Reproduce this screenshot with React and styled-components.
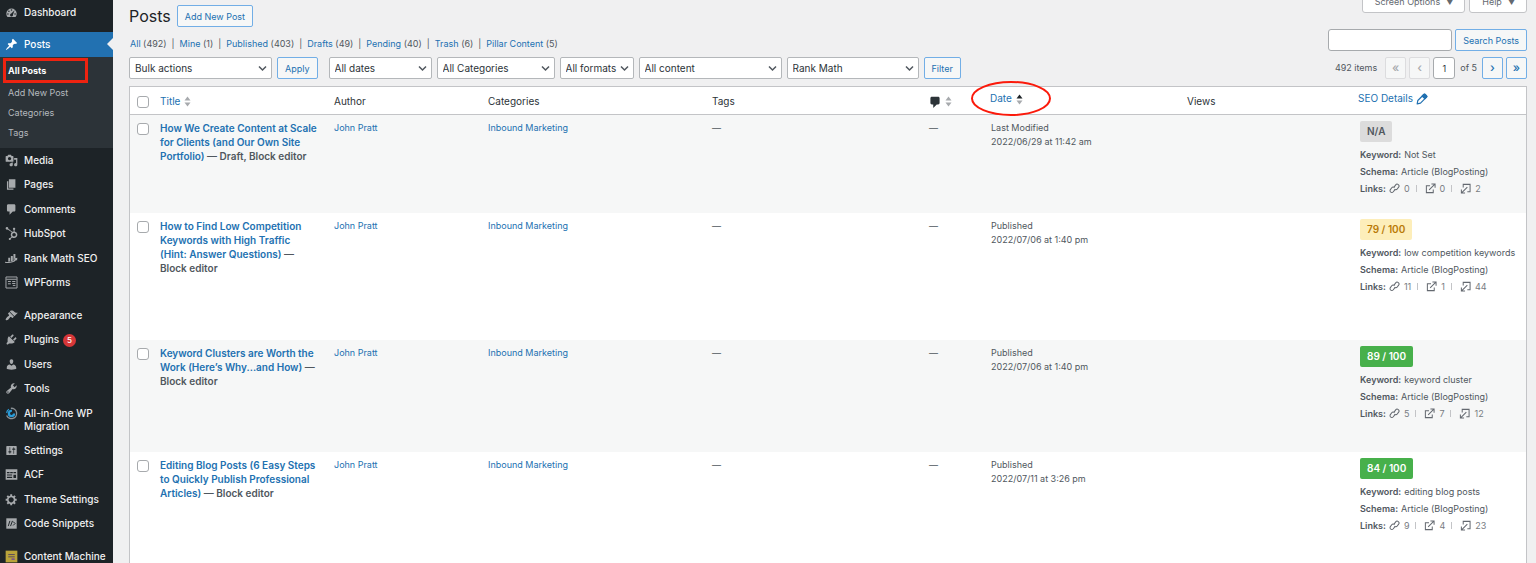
import React from 'react';
import styled, { createGlobalStyle, css } from 'styled-components';
import { FaHubspot } from 'react-icons/fa';

const GlobalStyle = createGlobalStyle`
  *, *::before, *::after {
    box-sizing: border-box;
  }

  body {
    margin: 0;
    background: #f0f0f1;
    color: #50575e;
    font-family: Inter, "Liberation Sans", sans-serif;
    font-size: 9px;
    line-height: 14px;
  }

  button, input, select {
    font-family: inherit;
    font-size: 9px;
  }

  a {
    color: #2271b1;
    text-decoration: none;
  }
`;

const Page = styled.div`
  display: flex;
  height: 100vh;
  overflow: hidden;
`;

// Sidebar
const Sidebar = styled.nav`
  flex: none;
  width: 113px;
  background: #1d2327;
`;

const MenuGroup = styled.ul`
  display: flex;
  flex-direction: column;
  height: ${(props) => props.$height}px;
  margin: 0 0 ${(props) => props.$gap || 0}px;
  padding: 0;
  list-style: none;
`;

const MenuItem = styled.li`
  display: flex;
  flex: 1 0 ${(props) => (props.$tall ? 37 : 24)}px;
`;

const MenuLink = styled.a`
  position: relative;
  display: flex;
  flex: 1;
  align-items: ${(props) => (props.$tall ? 'flex-start' : 'center')};
  gap: 6px;
  padding: ${(props) => (props.$tall ? '6px 8px 5px 5px' : '0 0 0 5px')};
  color: ${(props) => (props.$active ? '#fff' : '#f0f0f1')};
  background: ${(props) => (props.$active ? '#2271b1' : 'transparent')};
  font-size: 10px;
  font-weight: 500;
  line-height: 13px;

  svg {
    flex: none;
    width: 13px;
    height: 13px;
    color: ${(props) => (props.$active ? '#fff' : '#a7aaad')};
  }

  ${(props) => props.$active && css`
    &::after {
      content: '';
      position: absolute;
      right: 0;
      top: 6px;
      border: 6px solid transparent;
      border-left-width: 0;
      border-right-color: #f0f0f1;
    }
  `}
`;

const Count = styled.span`
  display: inline-block;
  width: 13px;
  height: 13px;
  margin-left: 4px;
  border-radius: 50%;
  background: #d63638;
  color: #fff;
  font-size: 8px;
  text-align: center;
`;

const SubMenu = styled.ul`
  margin: 0;
  padding: 1px 0 5px;
  list-style: none;
  background: #2c3338;
`;

const SubItem = styled.li`
  display: flex;
  height: ${(props) => (props.$current ? 25 : 20)}px;
  width: ${(props) => (props.$current ? '85px' : 'auto')};
  margin-left: 3px;
  padding-left: ${(props) => (props.$current ? 2 : 5)}px;
  align-items: center;
  border: ${(props) => (props.$current ? '3px solid #ee2310' : 'none')};

  a {
    color: ${(props) => (props.$current ? '#fff' : '#b4b9be')};
    font-weight: ${(props) => (props.$current ? 700 : 400)};
  }
`;

// Main area
const Main = styled.main`
  flex: 1;
  min-width: 0;
  padding: 0 9px 0 16px;
`;

const TopBar = styled.header`
  display: flex;
  justify-content: space-between;
  align-items: flex-start;
  height: 29px;
`;

const TitleRow = styled.div`
  display: flex;
  align-items: center;
  gap: 6px;
  padding-top: 5px;
`;

const PageTitle = styled.h1`
  margin: 0;
  color: #1d2327;
  font-size: 16px;
  font-weight: 400;
  line-height: 22px;
`;

const ScreenTabs = styled.div`
  display: flex;
  gap: 4px;
  margin-top: -10px;
`;

const ScreenTab = styled.button`
  height: 23px;
  padding: 0 10px 0 12px;
  border: 1px solid #c3c4c7;
  border-radius: 0 0 3px 3px;
  background: #fff;
  color: #646970;

  span {
    margin-left: 5px;
  }
`;

const Button = styled.button`
  height: 22px;
  padding: 0 7px;
  border: 1px solid ${(props) => (props.disabled ? '#dcdcde' : '#72aee6')};
  border-radius: 2px;
  background: #f6f7f7;
  color: ${(props) => (props.disabled ? '#a7aaad' : '#2271b1')};
  white-space: nowrap;
`;

const PageButton = styled(Button)`
  width: 21px;
  padding: 0 0 2px;
  font-size: 12px;
  font-weight: 500;
`;

const ViewsRow = styled.div`
  display: flex;
  justify-content: space-between;
  align-items: flex-end;
`;

const Views = styled.ul`
  display: flex;
  margin: 0;
  padding: 0 0 0 1px;
  list-style: none;

  li + li::before {
    content: '|';
    margin: 0 5px;
  }
`;

const SearchForm = styled.form`
  display: flex;
  gap: 3px;
`;

const TextBox = styled.input`
  width: ${(props) => props.$width}px;
  height: 22px;
  padding: 0 6px;
  border: 1px solid #a7aaad;
  border-radius: 3px;
  background: #fff;
  color: #2c3338;
  text-align: ${(props) => props.$align || 'left'};
`;

const TableNav = styled.div`
  display: flex;
  justify-content: space-between;
  margin: 6px 0 7px;
`;

const Filters = styled.div`
  display: flex;
  gap: 5px;
`;

const SelectWrap = styled.label`
  position: relative;
  display: block;
  width: ${(props) => props.$width}px;
  margin-left: ${(props) => (props.$apart ? 6 : 0)}px;

  select {
    width: 100%;
    height: 22px;
    padding: 0 14px 0 5px;
    border: 1px solid #b4b7ba;
    border-radius: 2px;
    background: #fff;
    color: #2c3338;
    font-size: 10px;
    appearance: none;
  }

  svg {
    position: absolute;
    right: 5px;
    top: 8px;
    width: 9px;
    height: 7px;
    pointer-events: none;
  }
`;

const Pagination = styled.div`
  display: flex;
  align-items: center;
  gap: 3px;
`;

const ItemsCount = styled.span`
  margin-right: 5px;
`;

const PageOf = styled.span`
  margin: 0 2px;
`;

// Posts table
const PostsTable = styled.table`
  width: 100%;
  border: 1px solid #c3c4c7;
  border-collapse: separate;
  border-spacing: 0;
  table-layout: fixed;
  background: #fff;
`;

const Th = styled.th`
  position: relative;
  height: 28px;
  padding: ${(props) => (props.$raised ? '4px 5px' : '0 6px')};
  border-bottom: 1px solid #c3c4c7;
  color: #2c3338;
  font-size: 10px;
  font-weight: 400;
  text-align: left;
  vertical-align: ${(props) => (props.$raised ? 'top' : 'middle')};

  svg {
    vertical-align: middle;
  }
`;

const SortIcon = styled.svg`
  width: 7px;
  height: 11px;
  margin-left: 1px;
`;

const Tr = styled.tr`
  height: ${(props) => props.$height}px;

  &:nth-child(odd) {
    background: #f6f7f7;
  }
`;

const Td = styled.td`
  padding: 6px;
  vertical-align: top;
`;

const TitleCell = styled(Td)`
  padding-right: 10px;
  font-size: 10px;
`;

const SeoCell = styled(Td)`
  padding-left: 7px;
  white-space: nowrap;
`;

const Check = styled.input`
  display: block;
  width: 12px;
  height: 12px;
  margin: 2px 0 0 1px;
  border: 1px solid #a7aaad;
  border-radius: 3px;
  background: #fff;
  appearance: none;
`;

const PostTitle = styled.strong`
  display: block;
  font-weight: 600;
`;

const Circled = styled.svg`
  position: absolute;
  left: -14px;
  top: -6px;
  width: 80px;
  height: 35px;
  pointer-events: none;
`;

const scoreColors = {
  none: ['#dcdcdc', '#50575e'],
  ok: ['#fdeeba', '#b97a07'],
  good: ['#47b04b', '#fff'],
};

const Score = styled.div`
  width: fit-content;
  height: 21px;
  margin-bottom: 4px;
  padding: 0 7px;
  border-radius: 2px;
  background: ${(props) => scoreColors[props.$level][0]};
  color: ${(props) => scoreColors[props.$level][1]};
  font-size: 10px;
  font-weight: 600;
  line-height: 21px;
`;

const SeoLine = styled.div`
  display: flex;
  align-items: center;
  gap: 3px;
  height: 17px;

  strong {
    font-weight: 600;
  }
`;

const LinkCount = styled.span`
  display: flex;
  align-items: center;
  gap: 4px;
  color: #787c82;

  & + &::before {
    content: '';
    width: 1px;
    height: 7px;
    margin: 0 4px 0 3px;
    background: #c3c4c7;
  }

  svg {
    width: 11px;
    height: 11px;
    color: #646970;
  }
`;

const Dashicon = ({ d }) => (
  <svg viewBox="0 0 20 20" fill="currentColor" fillRule="evenodd" aria-hidden="true">
    <path d={d} />
  </svg>
);

const icons = {
  dashboard: <Dashicon d="M3.8 17h12.4A8 8 0 1 0 3.8 17zM10 5a1.2 1.2 0 1 1 0 2.400 1.2 1.2 0 0 1 0-2.400zM6 6.800a1.2 1.2 0 1 1 0 2.400 1.2 1.2 0 0 1 0-2.400zM4.5 11a1.2 1.2 0 1 1 0 2.400 1.2 1.2 0 0 1 0-2.400zM15.5 11a1.2 1.2 0 1 1 0 2.400 1.2 1.2 0 0 1 0-2.400zM14.800 6.500l-2.600 7a2.2 2.2 0 1 1-2.500-1.800z" />,
  posts: <Dashicon d="M10.44 3.02l1.82-1.82 6.36 6.35-1.83 1.82c-1.05-.68-2.48-.57-3.41.36l-.75.75c-.92.93-1.04 2.35-.35 3.41l-1.83 1.82-2.41-2.41-2.8 2.79c-.42.42-3.38 2.71-3.8 2.29s1.86-3.39 2.28-3.81l2.79-2.79L4.1 9.36l1.83-1.82c1.05.69 2.48.57 3.4-.36l.75-.75c.93-.92 1.05-2.35.36-3.41z" />,
  media: <Dashicon d="M13 11V4c0-.55-.45-1-1-1h-1.67L9 1H5L3.67 3H2c-.55 0-1 .45-1 1v7c0 .55.45 1 1 1h10c.55 0 1-.45 1-1zM7 4.5c1.38 0 2.5 1.12 2.5 2.5S8.38 9.5 7 9.5 4.5 8.38 4.5 7 5.62 4.5 7 4.5zM14 6h5v10.5c0 1.38-1.12 2.5-2.5 2.5S14 17.88 14 16.5s1.12-2.5 2.5-2.5c.17 0 .34.02.5.05V9h-3V6zm-4 8.05V13h2v3.5c0 1.38-1.12 2.5-2.5 2.5S7 17.88 7 16.5 8.12 14 9.5 14c.17 0 .34.02.5.05z" />,
  pages: <Dashicon d="M6 15V2h10v13H6zm-1 1h8v2H3V5h2v11z" />,
  comments: <Dashicon d="M5 2h9c1.1 0 2 .9 2 2v7c0 1.1-.9 2-2 2h-2l-5 5v-5H5c-1.1 0-2-.9-2-2V4c0-1.1.9-2 2-2z" />,
  hubspot: <FaHubspot />,
  rankMath: <Dashicon d="M5 9h3v5.500l-3 .5zM9 6h3v7.500L9 14.500zM13 3h3v7l-3 2.500zM0 15c6 1 12 0 15.500-4l-1.500-1 5-1-.5 4.500-1.200-1.200C13 17 6 17.500 0 16.500z" />,
  wpforms: (
    <svg viewBox="0 0 20 20" fill="none" stroke="currentColor" strokeWidth="1.5" aria-hidden="true">
      <path d="M1.500 1.500h17v17h-17zM2 5h16M4.500 8.500h4.500M4.500 12h4.500M11 8.500h5M11 11.500h5M12 14.500h4" />
    </svg>
  ),
  appearance: <Dashicon d="M14.48 11.06L7.41 3.99l1.5-1.5c.5-.56 2.3-.47 3.51.32 1.21.8 1.43 1.28 2.91 2.1 1.18.64 2.45 1.26 4.45.85zm-.71.71L6.7 4.7 4.93 6.47c-.39.39-.39 1.02 0 1.41l1.06 1.06c.39.39.39 1.03 0 1.42-.6.6-1.43 1.11-2.21 1.69-.35.26-.7.53-1.01.84C1.43 14.23.4 16.08 1.4 17.07c.99 1 2.84-.03 4.18-1.36.31-.31.58-.66.85-1.02.57-.78 1.08-1.61 1.69-2.21.39-.39 1.02-.39 1.41 0l1.06 1.06c.39.39 1.02.39 1.41 0z" />,
  plugins: <Dashicon d="M13.11 4.36L9.87 7.6 8 5.73l3.24-3.24c.35-.34 1.05-.2 1.56.32.52.51.66 1.21.31 1.55zm-8 1.77l.91-1.12 9.01 9.01-1.19.84c-.71.71-2.63 1.16-3.82 1.16H6.14L4.9 17.26c-.59.59-1.54.59-2.12 0-.59-.58-.59-1.53 0-2.12l1.24-1.24v-3.88c0-1.13.4-3.19 1.09-3.89zm7.26 3.97l3.24-3.24c.34-.35 1.04-.21 1.55.31.52.51.66 1.21.31 1.55l-3.24 3.25z" />,
  users: <Dashicon d="M10 9.25c-2.27 0-2.73-3.44-2.73-3.44C7 4.02 7.82 2 9.97 2c2.16 0 2.98 2.02 2.71 3.81 0 0-.41 3.44-2.68 3.44zm0 2.57L12.72 10c2.39 0 4.52 2.33 4.52 4.53v2.49s-3.65 1.13-7.24 1.13c-3.65 0-7.24-1.13-7.24-1.13v-2.49c0-2.25 1.94-4.48 4.47-4.48z" />,
  tools: <Dashicon d="M16.68 9.77c-1.34 1.34-3.3 1.67-4.95.99l-5.41 6.52c-.99.99-2.59.99-3.58 0s-.99-2.59 0-3.57l6.52-5.42c-.68-1.65-.35-3.61.99-4.95 1.28-1.28 3.12-1.62 4.72-1.06l-2.89 2.89 2.82 2.82 2.86-2.87c.53 1.58.18 3.39-1.08 4.65zM3.81 16.21c.4.39 1.04.39 1.43 0 .4-.4.4-1.04 0-1.43-.39-.4-1.03-.4-1.43 0-.39.39-.39 1.03 0 1.43z" />,
  migration: (
    <svg viewBox="0 0 20 20" fill="none" strokeWidth="2" aria-hidden="true">
      <path d="M9 2a8 8 0 1 1-6.500 11" stroke="#8c9196" />
      <circle cx="10" cy="10" r="4" stroke="#2a9bd8" strokeWidth="3.5" strokeDasharray="19 6" />
      <path d="M2.500 9A7.500 7.500 0 0 1 6 3.500" stroke="#2a9bd8" />
    </svg>
  ),
  settings: <Dashicon d="M18 16V4c0-.55-.45-1-1-1H3c-.55 0-1 .45-1 1v12c0 .55.45 1 1 1h14c.55 0 1-.45 1-1zM8 11h1c.55 0 1 .45 1 1s-.45 1-1 1H8v1.5c0 .28-.22.5-.5.5s-.5-.22-.5-.5V13H6c-.55 0-1-.45-1-1s.45-1 1-1h1V5.5c0-.28.22-.5.5-.5s.5.22.5.5V11zm5-2h-1c-.55 0-1-.45-1-1s.45-1 1-1h1V5.5c0-.28.22-.5.5-.5s.5.22.5.5V7h1c.55 0 1 .45 1 1s-.45 1-1 1h-1v5.5c0 .28-.22.5-.5.5s-.5-.22-.5-.5V9z" />,
  acf: <Dashicon d="M1 2h18v16H1zM3 6v2h4V6zM8 6v2h4V6zM13 6v2h4V6zM3 10v1.500h8V10zM3 13.500v2h8v-2zM13 10.500v5h4v-5z" />,
  theme: <Dashicon d="M18 12h-2.18c-.17.7-.44 1.35-.81 1.93l1.54 1.54-2.1 2.1-1.54-1.54c-.58.36-1.23.63-1.91.79V19H8v-2.18c-.68-.16-1.33-.43-1.91-.79l-1.54 1.54-2.12-2.12 1.54-1.54c-.36-.58-.63-1.23-.79-1.91H1V9.03h2.17c.16-.7.44-1.35.8-1.94L2.43 5.55l2.1-2.1 1.54 1.54c.58-.37 1.24-.64 1.93-.81V2h3v2.18c.68.16 1.33.43 1.91.79l1.54-1.54 2.12 2.12-1.54 1.54c.36.59.64 1.24.8 1.94H18V12zm-8.5 2.5c2.2 0 4-1.8 4-4s-1.8-4-4-4-4 1.8-4 4 1.8 4 4 4z" />,
  snippets: (
    <svg viewBox="0 0 20 20" fill="none" aria-hidden="true">
      <rect x="2" y="2" width="16" height="16" fill="#a7aaad" />
      <path d="M7.500 6l-2.500 8M8.500 14l3-8M12.500 7l3 3-3 3" stroke="#1d2327" strokeWidth="1.5" />
    </svg>
  ),
  machine: (
    <svg viewBox="0 0 20 20" fill="none" aria-hidden="true">
      <rect x="1" y="1" width="18" height="18" fill="#b9a33a" />
      <path d="M5 7h10M5 10.500h10" stroke="#5a4a5e" strokeWidth="1.5" />
      <path d="M10 14h5" stroke="#6b3fa0" strokeWidth="2" />
    </svg>
  ),
};

const contentMenu = [
  ['Media', 'media'],
  ['Pages', 'pages'],
  ['Comments', 'comments'],
  ['HubSpot', 'hubspot'],
  ['Rank Math SEO', 'rankMath'],
  ['WPForms', 'wpforms'],
];

const adminMenu = [
  ['Appearance', 'appearance'],
  ['Plugins', 'plugins', 5],
  ['Users', 'users'],
  ['Tools', 'tools'],
  ['All-in-One WP Migration', 'migration'],
  ['Settings', 'settings'],
  ['ACF', 'acf'],
  ['Theme Settings', 'theme'],
  ['Code Snippets', 'snippets'],
];

const views = [
  ['All', 492],
  ['Mine', 1],
  ['Published', 403],
  ['Drafts', 49],
  ['Pending', 40],
  ['Trash', 6],
  ['Pillar Content', 5],
];

const posts = [
  {
    title: 'How We Create Content at Scale for Clients (and Our Own Site Portfolio)',
    state: 'Draft, Block editor',
    status: 'Last Modified',
    date: '2022/06/29 at 11:42 am',
    score: 'N/A',
    level: 'none',
    keyword: 'Not Set',
    links: [0, 0, 2],
    height: 98,
  },
  {
    title: 'How to Find Low Competition Keywords with High Traffic (Hint: Answer Questions)',
    state: 'Block editor',
    status: 'Published',
    date: '2022/07/06 at 1:40 pm',
    score: '79 / 100',
    level: 'ok',
    keyword: 'low competition keywords',
    links: [11, 1, 44],
    height: 127,
  },
  {
    title: 'Keyword Clusters are Worth the Work (Here’s Why...and How)',
    state: 'Block editor',
    status: 'Published',
    date: '2022/07/06 at 1:40 pm',
    score: '89 / 100',
    level: 'good',
    keyword: 'keyword cluster',
    links: [5, 7, 12],
    height: 112,
  },
  {
    title: 'Editing Blog Posts (6 Easy Steps to Quickly Publish Professional Articles)',
    state: 'Block editor',
    status: 'Published',
    date: '2022/07/11 at 3:26 pm',
    score: '84 / 100',
    level: 'good',
    keyword: 'editing blog posts',
    links: [9, 4, 23],
    height: 126,
  },
];

const columns = [24, 174, 154, 224, 217, 62, 196, 172, 173];

const MenuEntry = ({ label, icon, count, active }) => {
  const tall = label.length > 20;

  return (
    <MenuItem $tall={tall}>
      <MenuLink href="#" $active={active} $tall={tall}>
        {icons[icon]}
        <span>
          {label}
          {count && <Count>{count}</Count>}
        </span>
      </MenuLink>
    </MenuItem>
  );
};

const Select = ({ label, name, width, apart }) => (
  <SelectWrap $width={width} $apart={apart}>
    <select aria-label={name}>
      <option>{label}</option>
    </select>
    <svg viewBox="0 0 9 7" fill="none" stroke="#50575e" strokeWidth="1.5" aria-hidden="true">
      <path d="M1 1.500l3.500 3.500L8 1.500" />
    </svg>
  </SelectWrap>
);

const SortArrows = ({ up = '#a7aaad' }) => (
  <SortIcon viewBox="0 0 7 11" aria-hidden="true">
    <path d="M3.500 0.500L6.500 4.500H0.500z" fill={up} />
    <path d="M0.500 6.500h6L3.500 10.500z" fill="#a7aaad" />
  </SortIcon>
);

const InternalIcon = () => (
  <svg viewBox="0 0 12 12" fill="none" stroke="currentColor" strokeWidth="1.1" aria-hidden="true">
    <path d="M5.500 4.500l1.800-2.400a2 2 0 0 1 3.200 2.400L9 6.500a2 2 0 0 1-3 .2" />
    <path d="M6.500 7.200L4.700 9.600a2 2 0 0 1-3.200-2.400L3 5.200a2 2 0 0 1 3-.2" />
  </svg>
);

const ExternalIcon = () => (
  <svg viewBox="0 0 12 12" fill="none" stroke="currentColor" strokeWidth="1.1" aria-hidden="true">
    <path d="M5.500 3H1.500v7.500H9V7M4.500 7.500L10.500 1.500M7 1.200h4v4" />
  </svg>
);

const IncomingIcon = () => (
  <svg viewBox="0 0 12 12" fill="none" stroke="currentColor" strokeWidth="1.1" aria-hidden="true">
    <path d="M3.500 5V1.500H11V9.500H8M8 4.500L2 10.500M1.500 7v4h4" />
  </svg>
);

const PostRow = ({ post }) => (
  <Tr $height={post.height}>
    <Td>
      <Check type="checkbox" aria-label={`Select ${post.title}`} />
    </Td>
    <TitleCell>
      <PostTitle>
        <a href="#">{post.title}</a> — {post.state}
      </PostTitle>
    </TitleCell>
    <Td><a href="#">John Pratt</a></Td>
    <Td><a href="#">Inbound Marketing</a></Td>
    <Td>—</Td>
    <Td>—</Td>
    <Td>
      {post.status}
      <br />
      {post.date}
    </Td>
    <Td />
    <SeoCell>
      <Score $level={post.level}>{post.score}</Score>
      <SeoLine>
        <strong>Keyword:</strong> {post.keyword}
      </SeoLine>
      <SeoLine>
        <strong>Schema:</strong> Article (BlogPosting)
      </SeoLine>
      <SeoLine>
        <strong>Links:</strong>
        <LinkCount><InternalIcon />{post.links[0]}</LinkCount>
        <LinkCount><ExternalIcon />{post.links[1]}</LinkCount>
        <LinkCount><IncomingIcon />{post.links[2]}</LinkCount>
      </SeoLine>
    </SeoCell>
  </Tr>
);

const App = () => {
  return (
    <>
      <GlobalStyle />
      <Page>
        <Sidebar>
          <MenuGroup $height={25} $gap={7}>
            <MenuEntry label="Dashboard" icon="dashboard" />
          </MenuGroup>
          <MenuGroup $height={25}>
            <MenuEntry label="Posts" icon="posts" active />
          </MenuGroup>
          <SubMenu>
            <SubItem $current><a href="#">All Posts</a></SubItem>
            <SubItem><a href="#">Add New Post</a></SubItem>
            <SubItem><a href="#">Categories</a></SubItem>
            <SubItem><a href="#">Tags</a></SubItem>
          </SubMenu>
          <MenuGroup $height={147} $gap={8}>
            {contentMenu.map(([label, icon]) => (
              <MenuEntry key={label} label={label} icon={icon} />
            ))}
          </MenuGroup>
          <MenuGroup $height={233} $gap={8}>
            {adminMenu.map(([label, icon, count]) => (
              <MenuEntry key={label} label={label} icon={icon} count={count} />
            ))}
          </MenuGroup>
          <MenuGroup $height={25}>
            <MenuEntry label="Content Machine" icon="machine" />
          </MenuGroup>
        </Sidebar>

        <Main>
          <TopBar>
            <TitleRow>
              <PageTitle>Posts</PageTitle>
              <Button>Add New Post</Button>
            </TitleRow>
            <ScreenTabs>
              <ScreenTab>Screen Options<span>▼</span></ScreenTab>
              <ScreenTab>Help<span>▼</span></ScreenTab>
            </ScreenTabs>
          </TopBar>

          <ViewsRow>
            <Views>
              {views.map(([label, total]) => (
                <li key={label}>
                  <a href="#">{label}</a> ({total})
                </li>
              ))}
            </Views>
            <SearchForm>
              <TextBox type="search" aria-label="Search Posts" $width={124} />
              <Button type="button">Search Posts</Button>
            </SearchForm>
          </ViewsRow>

          <TableNav>
            <Filters>
              <Select label="Bulk actions" name="Bulk action" width={143} />
              <Button>Apply</Button>
              <Select label="All dates" name="Filter by date" width={103} apart />
              <Select label="All Categories" name="Filter by category" width={118} />
              <Select label="All formats" name="Filter by format" width={74} />
              <Select label="All content" name="Filter by content" width={143} />
              <Select label="Rank Math" name="Filter by Rank Math" width={132} />
              <Button>Filter</Button>
            </Filters>
            <Pagination>
              <ItemsCount>492 items</ItemsCount>
              <PageButton disabled>«</PageButton>
              <PageButton disabled>‹</PageButton>
              <TextBox type="text" aria-label="Current page" defaultValue="1" $width={22} $align="center" />
              <PageOf>of 5</PageOf>
              <PageButton>›</PageButton>
              <PageButton>»</PageButton>
            </Pagination>
          </TableNav>

          <PostsTable>
            <colgroup>
              {columns.map((width, i) => (
                <col key={i} width={width} />
              ))}
            </colgroup>
            <thead>
              <tr>
                <Th><Check type="checkbox" aria-label="Select all" /></Th>
                <Th><a href="#">Title <SortArrows /></a></Th>
                <Th>Author</Th>
                <Th>Categories</Th>
                <Th>Tags</Th>
                <Th>
                  <svg width="12" height="12" viewBox="2 1 15 17" fill="#2c3338" aria-label="Comments">
                    <path d="M5 2h9c1.1 0 2 .9 2 2v7c0 1.1-.9 2-2 2h-2l-5 5v-5H5c-1.1 0-2-.9-2-2V4c0-1.1.9-2 2-2z" />
                  </svg>
                  {' '}
                  <SortArrows />
                </Th>
                <Th $raised>
                  <a href="#">Date <SortArrows up="#1d2327" /></a>
                  <Circled viewBox="0 0 80 35" fill="none" aria-hidden="true">
                    <ellipse cx="40" cy="17.5" rx="39" ry="16.5" stroke="#fb1a0b" strokeWidth="2" />
                  </Circled>
                </Th>
                <Th>Views</Th>
                <Th $raised>
                  <a href="#">
                    SEO Details{' '}
                    <svg width="12" height="12" viewBox="0 0 12 12" fill="none" stroke="#2271b1" strokeWidth="1.2" strokeLinejoin="round" aria-hidden="true">
                      <path d="M1.200 10.800l.6-3.300L7.800 1.500a1 1 0 0 1 1.400 0l1.300 1.300a1 1 0 0 1 0 1.400L4.500 10.200z" />
                      <path d="M6.300 3l2.700 2.700" />
                      <path d="M7.800 1.500a1 1 0 0 1 1.400 0l1.300 1.300a1 1 0 0 1 0 1.400L9 5.700 6.300 3z" fill="#2271b1" />
                    </svg>
                  </a>
                </Th>
              </tr>
            </thead>
            <tbody>
              {posts.map((post) => (
                <PostRow key={post.title} post={post} />
              ))}
            </tbody>
          </PostsTable>
        </Main>
      </Page>
    </>
  );
};

export default App;
